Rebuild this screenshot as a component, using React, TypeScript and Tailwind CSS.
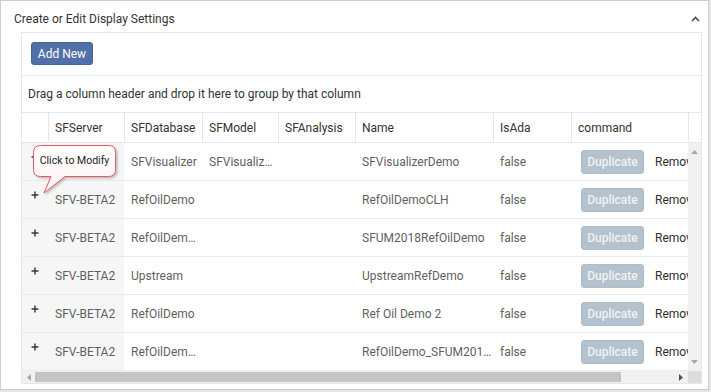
import React from "react";

type Row = { server: string; db: string; model: string; analysis: string; name: string; isAda: string };

const rows: Row[] = [
  { server: "", db: "SFVisualizer", model: "SFVisualiz…", analysis: "", name: "SFVisualizerDemo", isAda: "false" },
  { server: "SFV-BETA2", db: "RefOilDemo", model: "", analysis: "", name: "RefOilDemoCLH", isAda: "false" },
  { server: "SFV-BETA2", db: "RefOilDem…", model: "", analysis: "", name: "SFUM2018RefOilDemo", isAda: "false" },
  { server: "SFV-BETA2", db: "Upstream", model: "", analysis: "", name: "UpstreamRefDemo", isAda: "false" },
  { server: "SFV-BETA2", db: "RefOilDemo", model: "", analysis: "", name: "Ref Oil Demo 2", isAda: "false" },
  { server: "SFV-BETA2", db: "RefOilDem…", model: "", analysis: "", name: "RefOilDemo_SFUM201…", isAda: "false" },
];

function Plus() {
  return (
    <svg width="8" height="8" viewBox="0 0 8 8">
      <path d="M4 0.5v7M0.5 4h7" stroke="#3a3a3a" strokeWidth="1.5" fill="none" />
    </svg>
  );
}

export default function App() {
  return (
    <div className="w-[711px] h-[392px] bg-[#e6e6e6] relative font-['Roboto',sans-serif] text-[12px] overflow-hidden">
      <div className="w-[709px] h-[390px] bg-white border border-[#cdcdcd] flex flex-col">
        {/* Title */}
        <div className="h-[31px] pt-[4px] pl-[13px] pr-[8px] flex items-center justify-between text-[#333] text-[12px]">
          <span>Create or Edit Display Settings</span>
          <svg width="9" height="6" viewBox="0 0 9 6">
            <path d="M1 5L4.5 1.5L8 5" stroke="#3c4a6a" strokeWidth="1.6" fill="none" />
          </svg>
        </div>
        {/* Grid */}
        <div className="ml-[20px] w-[681px] border border-[#e4e8ec] flex flex-col">
          {/* Toolbar */}
          <div className="h-[43px] border-b border-[#e4e9ef] pt-[9px] pl-[9px]">
            <button className="h-[23px] w-[62px] bg-[#5170a7] border border-[#46639a] rounded-[3px] text-white text-[12px] leading-none">
              Add New
            </button>
          </div>
          {/* Group panel */}
          <div className="h-[36px] flex items-center pl-[6px] text-[#333] text-[12px]">
            Drag a column header and drop it here to group by that column
          </div>
          {/* Header */}
          <div className="h-[31px] border-t border-b border-[#e4e8ec] flex text-[#333]">
            <div className="w-[26px]" />
            <div className="w-[76px] border-l border-[#e4e8ec] pl-[6px] flex items-center">SFServer</div>
            <div className="w-[78px] border-l border-[#e4e8ec] pl-[6px] flex items-center">SFDatabase</div>
            <div className="w-[76px] border-l border-[#e4e8ec] pl-[6px] flex items-center">SFModel</div>
            <div className="w-[77px] border-l border-[#e4e8ec] pl-[6px] flex items-center">SFAnalysis</div>
            <div className="w-[138px] border-l border-[#e4e8ec] pl-[6px] flex items-center">Name</div>
            <div className="w-[78px] border-l border-[#e4e8ec] pl-[6px] flex items-center">IsAda</div>
            <div className="w-[117px] border-l border-[#e4e8ec] pl-[6px] flex items-center">command</div>
            <div className="w-[13px] border-l border-[#e4e8ec]" />
          </div>
          {/* Body */}
          <div className="flex">
            <div className="w-[666px] flex flex-col">
              {rows.map((r, i) => (
                <div key={i} className="h-[38px] border-b border-[#e8ebee] flex text-[#5f5f5f]">
                  <div className="w-[26px] bg-[#f6f6f7] pl-[9px] pt-[10px]">
                    <Plus />
                  </div>
                  <div className="w-[76px] bg-[#f6f6f7] pl-[7px] flex items-center whitespace-nowrap overflow-hidden">{r.server}</div>
                  <div className="w-[78px] pl-[7px] flex items-center whitespace-nowrap overflow-hidden">{r.db}</div>
                  <div className="w-[76px] pl-[7px] flex items-center whitespace-nowrap overflow-hidden">{r.model}</div>
                  <div className="w-[77px] pl-[7px] flex items-center whitespace-nowrap overflow-hidden">{r.analysis}</div>
                  <div className="w-[138px] pl-[7px] flex items-center whitespace-nowrap overflow-hidden">{r.name}</div>
                  <div className="w-[78px] pl-[7px] flex items-center whitespace-nowrap overflow-hidden">{r.isAda}</div>
                  <div className="w-[117px] pl-[10px] flex items-center whitespace-nowrap overflow-hidden">
                    <span className="h-[24px] w-[63px] shrink-0 rounded-[3px] bg-[#b4c2ce] border border-[#aebdca] text-[#eef2f5] font-medium flex items-center justify-center">
                      Duplicate
                    </span>
                    <span className="ml-[11px] text-[#2e2e2e]">Remove</span>
                  </div>
                </div>
              ))}
            </div>
            {/* vertical scrollbar */}
            <div className="w-[13px] bg-[#f1f1f1] flex flex-col items-center justify-between py-[7px]">
              <svg width="7" height="4" viewBox="0 0 7 4"><path d="M0 4L3.5 0L7 4Z" fill="#a8a8a8" /></svg>
              <svg width="7" height="4" viewBox="0 0 7 4"><path d="M0 0L3.5 4L7 0Z" fill="#a8a8a8" /></svg>
            </div>
          </div>
          {/* horizontal scrollbar */}
          <div className="h-[12px] flex">
            <div className="w-[666px] bg-[#f1f1f1] flex items-center">
              <div className="w-[13px] flex items-center justify-center">
                <svg width="4" height="7" viewBox="0 0 4 7"><path d="M4 0L0 3.5L4 7Z" fill="#a8a8a8" /></svg>
              </div>
              <div className="w-[586px] h-[10px] bg-[#c4c4c4]" />
              <div className="flex-1 flex items-center justify-end pr-[5px]">
                <svg width="4" height="7" viewBox="0 0 4 7"><path d="M0 0L4 3.5L0 7Z" fill="#505050" /></svg>
              </div>
            </div>
            <div className="w-[13px] bg-[#dcdcdc]" />
          </div>
        </div>
      </div>

      {/* Tooltip */}
      <div className="absolute left-[30px] top-[142px] w-[92px] h-[56px]">
        <svg width="92" height="56" viewBox="0 0 92 56" className="absolute left-0 top-0">
          <defs>
            <linearGradient id="tg" x1="0" y1="0" x2="0" y2="1">
              <stop offset="0" stopColor="#ffffff" />
              <stop offset="1" stopColor="#fdf1f3" />
            </linearGradient>
            <filter id="ts" x="-20%" y="-20%" width="140%" height="140%">
              <feDropShadow dx="1.5" dy="1.5" stdDeviation="1.2" floodColor="#000" floodOpacity="0.25" />
            </filter>
          </defs>
          <path
            d="M10.5 3.5 H78.5 Q85.5 3.5 85.5 10.5 V27.5 Q85.5 34.5 78.5 34.5 H35 L14 51 L21 34.5 H10.5 Q3.5 34.5 3.5 27.5 V10.5 Q3.5 3.5 10.5 3.5 Z"
            fill="url(#tg)"
            stroke="#e05866"
            strokeWidth="1"
            filter="url(#ts)"
          />
        </svg>
        <div className="absolute left-[3px] top-[3px] w-[83px] h-[32px] flex items-center justify-center text-[#222] text-[10.5px] whitespace-nowrap">
          Click to Modify
        </div>
      </div>
    </div>
  );
}
